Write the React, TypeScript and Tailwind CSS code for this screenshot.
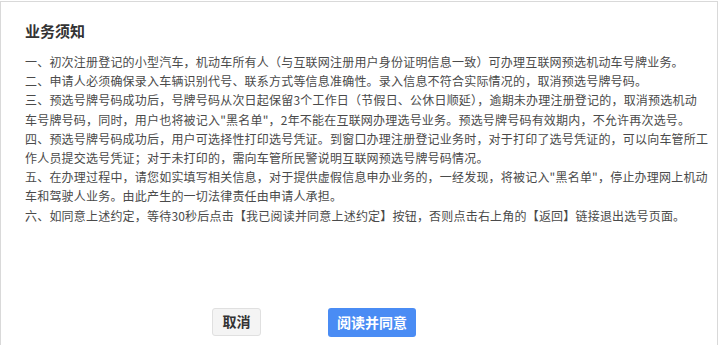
import { useState } from 'react';

// 每段按原页面的换行拆开
const rules: string[][] = [
    ['一、初次注册登记的小型汽车，机动车所有人（与互联网注册用户身份证明信息一致）可办理互联网预选机动车号牌业务。'],
    ['二、申请人必须确保录入车辆识别代号、联系方式等信息准确性。录入信息不符合实际情况的，取消预选号牌号码。'],
    [
        '三、预选号牌号码成功后，号牌号码从次日起保留3个工作日（节假日、公休日顺延），逾期未办理注册登记的，取消预选机动',
        '车号牌号码，同时，用户也将被记入"黑名单"，2年不能在互联网办理选号业务。预选号牌号码有效期内，不允许再次选号。',
    ],
    [
        '四、预选号牌号码成功后，用户可选择性打印选号凭证。到窗口办理注册登记业务时，对于打印了选号凭证的，可以向车管所工',
        '作人员提交选号凭证；对于未打印的，需向车管所民警说明互联网预选号牌号码情况。',
    ],
    [
        '五、在办理过程中，请您如实填写相关信息，对于提供虚假信息申办业务的，一经发现，将被记入"黑名单"，停止办理网上机动',
        '车和驾驶人业务。由此产生的一切法律责任由申请人承担。',
    ],
    ['六、如同意上述约定，等待30秒后点击【我已阅读并同意上述约定】按钮，否则点击右上角的【返回】链接退出选号页面。'],
];

const App = () => {
    const [agreed, setAgreed] = useState(false);

    return (
        <div
            className="h-[345px] overflow-hidden bg-white pt-px"
            style={{ fontFamily: '"Microsoft YaHei", "Noto Sans CJK SC", "Noto Sans", sans-serif' }}
        >
            <div className="h-[400px] w-[718px] border border-[#d9d9d9] bg-white pt-[19px] pl-[24px]">
                <h1 className="text-[15px] leading-[20px] font-bold text-[#333]">业务须知</h1>

                <div className="mt-[11px] text-[12px] leading-[19.2px] tracking-[0.2px] whitespace-nowrap text-[#4a4a4a]">
                    {rules.map((lines, i) => (
                        <p key={i}>
                            {lines.map((l, j) => (
                                <span key={j} className="block">
                                    {l}
                                </span>
                            ))}
                        </p>
                    ))}
                </div>

                {/* 按钮 */}
                <div className="mt-[83px] flex gap-[67px] pl-[187px]">
                    <button className="h-[28px] w-[49px] rounded-[3px] border border-[#e0e0e0] bg-[#f4f4f4] text-[14px] font-bold text-[#333]">
                        取消
                    </button>
                    <button
                        onClick={() => setAgreed(!agreed)}
                        className="h-[29px] w-[88px] rounded-[3px] bg-[#4a8cf4] text-[14px] font-bold text-white"
                    >
                        阅读并同意
                    </button>
                </div>
            </div>
        </div>
    );
};

export default App;
